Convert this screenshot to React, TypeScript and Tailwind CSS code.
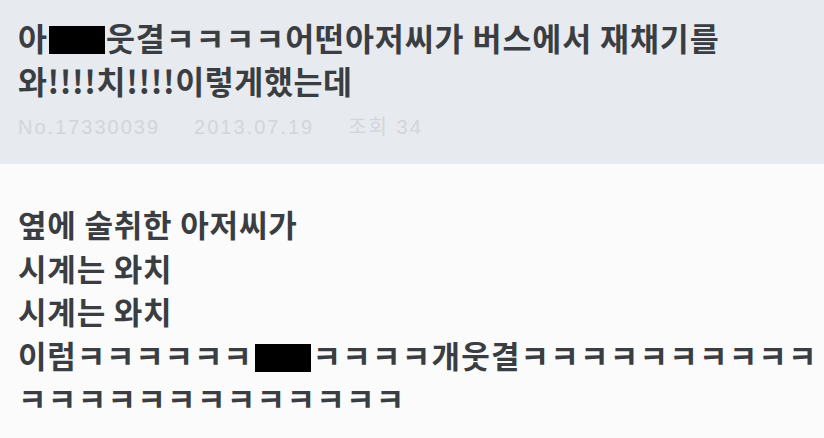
export default function App() {
  const font = { fontFamily: '"Noto Sans CJK KR", "Noto Sans", sans-serif' };
  return (
    <div className="w-[824px] h-[438px] overflow-hidden bg-[#fbfbfb] text-[#3a3d41]" style={font}>
      {/* header */}
      <div className="h-[164px] bg-[#e7eaee] px-[18px] pt-[16px]">
        <h1 className="text-[31.5px] leading-[43px] font-bold tracking-[0.9px] whitespace-nowrap">
          아<span className="inline-block w-[56px] h-[28px] bg-black align-[-3px] mx-[1px]" />웃결ㅋㅋㅋㅋ어떤아저씨가 버스에서 재채기를
          <br />
          <span className="tracking-[0.6px]">와!!!!치!!!!이렇게했는데</span>
        </h1>
        <div className="mt-[13px] flex gap-[34px] text-[20px] leading-[24px] tracking-[2px] text-[#d2d6dc]" style={{ fontFamily: '"Liberation Sans", "Noto Sans CJK KR", sans-serif' }}>
          <span>No.17330039</span>
          <span>2013.07.19</span>
          <span>조회 34</span>
        </div>
      </div>
      {/* body */}
      <div className="px-[18px] pt-[38px] text-[31px] leading-[43.5px] font-semibold tracking-[0.8px] whitespace-nowrap">
        <p>옆에 술취한 아저씨가</p>
        <p>시계는 와치</p>
        <p>시계는 와치</p>
        <p>
          이럼ㅋㅋㅋㅋㅋㅋ<span className="inline-block w-[56px] h-[28px] bg-black align-[-4px] mx-[2px]" />
          <span className="tracking-[1.2px]">ㅋㅋㅋㅋ개웃결ㅋㅋㅋㅋㅋㅋㅋㅋㅋㅋ</span>
        </p>
        <p className="tracking-[1.3px]">ㅋㅋㅋㅋㅋㅋㅋㅋㅋㅋㅋㅋㅋ</p>
      </div>
    </div>
  );
}
